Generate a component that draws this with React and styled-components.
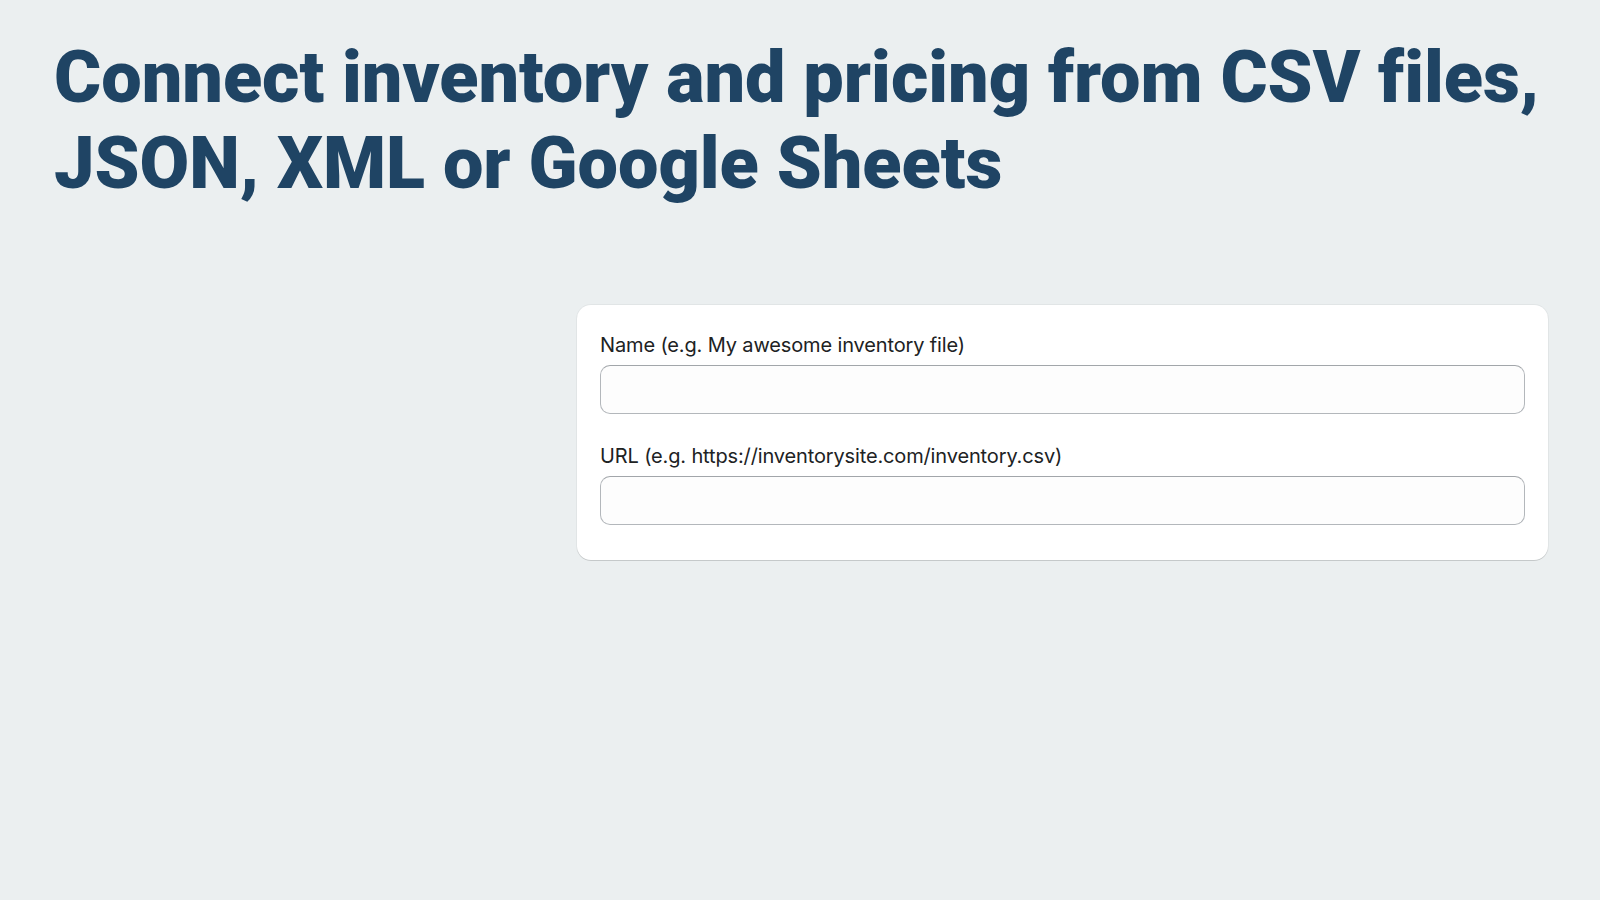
import React from 'react'
import styled, { createGlobalStyle } from 'styled-components'

const GlobalStyle = createGlobalStyle`
  html, body {
    margin: 0;
    padding: 0;
    background: #ebeff0;
  }
  body {
    font-family: Inter, "Noto Sans", sans-serif;
  }
`

const Page = styled.div`
  min-height: 100vh;
  box-sizing: border-box;
  padding: 35px 52px 40px 52px;
`

const Title = styled.h1`
  margin: 0 0 0 2px;
  font-family: Roboto, "Liberation Sans", sans-serif;
  font-weight: 900;
  font-size: 72px;
  line-height: 86px;
  letter-spacing: -0.03px;
  color: #1f4464;
`

const Layout = styled.div`
  display: grid;
  grid-template-columns: minmax(0, 1fr) 971px;
  gap: 20px;
  margin-top: 98px;
`

const Card = styled.div`
  grid-column: 2;
  background: #fff;
  border-radius: 14px;
  box-shadow: 0 1px 0 rgba(0, 0, 0, 0.12), 0 0 0 1px rgba(0, 0, 0, 0.04);
  padding: 28px 23px 35px;
  display: flex;
  flex-direction: column;
  gap: 30px;
`

const Field = styled.div`
  display: flex;
  flex-direction: column;
`

const Label = styled.label`
  font-size: 20px;
  letter-spacing: -0.14px;
  line-height: 24px;
  color: #202223;
  margin-bottom: 8px;
`

const Input = styled.input`
  box-sizing: border-box;
  height: 49px;
  width: 100%;
  border: 1px solid #b3b7bb;
  border-top-color: #a2a6aa;
  border-radius: 10px;
  background: #fdfdfd;
  font-family: inherit;
  font-size: 20px;
  padding: 0 14px;
  outline: none;
`

const fields = [
  { id: 'name', label: 'Name (e.g. My awesome inventory file)' },
  { id: 'url', label: 'URL (e.g. https://inventorysite.com/inventory.csv)' },
]

const App = () => {
  return (
    <Page>
      <GlobalStyle />
      <Title>Connect inventory and pricing from CSV files, JSON, XML or Google Sheets</Title>
      <Layout>
        <Card>
          {fields.map((f) => (
            <Field key={f.id}>
              <Label htmlFor={f.id}>{f.label}</Label>
              <Input id={f.id} type="text" />
            </Field>
          ))}
        </Card>
      </Layout>
    </Page>
  )
}

export default App
